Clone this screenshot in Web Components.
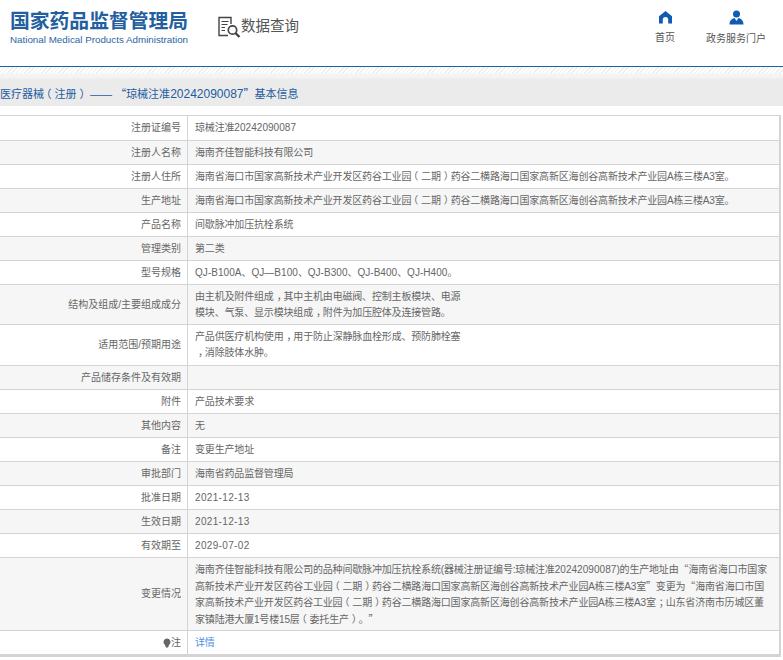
<!DOCTYPE html>
<html lang="zh">
<head>
<meta charset="utf-8">
<style>
html, body { margin: 0; padding: 0; background: #fff; }
body { font-family: "Liberation Sans", "Noto Sans CJK SC", sans-serif; overflow: hidden; height: 660px; }
</style>
</head>
<body>
<site-header></site-header>
<crumb-bar>医疗器械（注册） —— “琼械注准20242090087”基本信息</crumb-bar>
<info-table>
  <info-row label="注册证编号">琼械注准20242090087</info-row>
  <info-row label="注册人名称">海南齐佳智能科技有限公司</info-row>
  <info-row label="注册人住所">海南省海口市国家高新技术产业开发区药谷工业园（二期）药谷二横路海口国家高新区海创谷高新技术产业园A栋三楼A3室。</info-row>
  <info-row label="生产地址">海南省海口市国家高新技术产业开发区药谷工业园（二期）药谷二横路海口国家高新区海创谷高新技术产业园A栋三楼A3室。</info-row>
  <info-row label="产品名称">间歇脉冲加压抗栓系统</info-row>
  <info-row label="管理类别">第二类</info-row>
  <info-row label="型号规格">QJ-B100A、QJ—B100、QJ-B300、QJ-B400、QJ-H400。</info-row>
  <info-row label="结构及组成/主要组成成分" size="tall">由主机及附件组成，其中主机由电磁阀、控制主板模块、电源<br>模块、气泵、显示模块组成，附件为加压腔体及连接管路。</info-row>
  <info-row label="适用范围/预期用途" size="tall2">产品供医疗机构使用，用于防止深静脉血栓形成、预防肺栓塞<br>，消除肢体水肿。</info-row>
  <info-row label="产品储存条件及有效期"></info-row>
  <info-row label="附件">产品技术要求</info-row>
  <info-row label="其他内容">无</info-row>
  <info-row label="备注">变更生产地址</info-row>
  <info-row label="审批部门">海南省药品监督管理局</info-row>
  <info-row label="批准日期">2021-12-13</info-row>
  <info-row label="生效日期">2021-12-13</info-row>
  <info-row label="有效期至">2029-07-02</info-row>
  <info-row label="变更情况" size="huge">海南齐佳智能科技有限公司的品种间歇脉冲加压抗栓系统(器械注册证编号:琼械注准20242090087)的生产地址由“海南省海口市国家<br>高新技术产业开发区药谷工业园（二期）药谷二横路海口国家高新区海创谷高新技术产业园A栋三楼A3室”变更为“海南省海口市国<br>家高新技术产业开发区药谷工业园（二期）药谷二横路海口国家高新区海创谷高新技术产业园A栋三楼A3室；山东省济南市历城区董<br>家镇陆港大厦1号楼15层（委托生产）。”</info-row>
  <info-row label="注" note><a>详情</a></info-row>
</info-table>
<script>
// wraps punctuation and number runs so they can be nudged from ::slotted rules
function markText(html) {
  return html
    .replace(/\d{4}-\d\d-\d\d/g, '<span class="date">$&</span>')
    .replace(/QJ[-—][A-Z0-9]+|\d{6,}/g, '<span class="num">$&</span>')
    .replace(/（/g, '<span class="open">（</span>')
    .replace(/[）；，]/g, '<span class="close">$&</span>')
    .replace(/[“”]/g, '<span class="quote">$&</span>')
}

// half width glyphs with margins, so the mark sits mid cell
const markStyle = `
::slotted(.open) { font-feature-settings: "halt"; margin-left: 2px; margin-right: 3px; }
::slotted(.close) { font-feature-settings: "halt"; margin-left: 3px; margin-right: 2px; }
::slotted(.quote) { font-family: "Noto Sans CJK SC", sans-serif; }
`

class SiteHeader extends HTMLElement {
  constructor() {
    super()
    this.attachShadow({ mode: 'open' })
    this.shadowRoot.innerHTML = `${this.style}${this.html}`
  }

  get html() { return `
<div class="top">
  <div class="logo">
    <div class="cn">国家药品监督管理局</div>
    <div class="en">National Medical Products Administration</div>
  </div>
  <div class="query">
    <svg width="23" height="23" viewBox="0 0 23 23" fill="none" stroke="#444">
      <path d="M10 19.5H1V1.5H13V8" stroke-width="1.4"/>
      <path d="M3.5 5.5h7M3.5 8.5h6M3.5 11.5h3.5M3.5 14.5h3.5" stroke-width="1.2"/>
      <circle cx="14.5" cy="14" r="4.2" stroke-width="1.7"/>
      <path d="M17.5 17.2l4 3.8" stroke-width="2.4"/>
    </svg>
    <span>数据查询</span>
  </div>
  <div class="nav">
    <div class="item home">
      <svg width="15" height="14" viewBox="0 0 15 14"><path fill="#0f5cb0" d="M7.5 1L14 6.2V13.5H10.2V9.6a2.7 2.7 0 0 0-5.4 0V13.5H1V6.2Z"/></svg>
      <span>首页</span>
    </div>
    <div class="item portal">
      <svg width="15" height="15" viewBox="0 0 15 15"><circle fill="#0f5cb0" cx="7.5" cy="4" r="3.5"/><path fill="#0f5cb0" d="M0.5 14.5C0.5 10.5 3 8.5 5.5 8L7.5 11L9.5 8C12 8.5 14.5 10.5 14.5 14.5Z"/></svg>
      <span>政务服务门户</span>
    </div>
  </div>
</div>
<div class="hatch"></div>
    `}

  get style() { return `
<style>
:host { display: block; }
.top { display: flex; height: 67px; box-sizing: border-box; border-bottom: 1px solid #1c64a4; }
.logo { width: 218px; padding: 8px 0 0 10px; box-sizing: border-box; flex: none; }
.cn { font: bold 19.8px/24px "Noto Sans CJK SC", sans-serif; color: #235fa0; white-space: nowrap; }
.en { font: 9.8px/12px "Liberation Sans", sans-serif; color: #2a65a5; margin-top: 2px; white-space: nowrap; }
.query { display: flex; align-items: flex-start; padding-top: 16px; color: #555; font: 14.5px/20px "Noto Sans CJK SC", sans-serif; }
.query span { margin-top: -1px; }
.nav { margin-left: auto; display: flex; padding: 10px 17px 0 0; }
.item { display: flex; flex-direction: column; align-items: center; font: 10px/14px "Noto Sans CJK SC", sans-serif; color: #555; }
.item span { margin-top: 6px; }
.home { margin-right: 31px; }
.hatch { height: 12px; background:
  repeating-linear-gradient(135deg, #eceff1 0 1px, #fff 1px 3px) top/100% 6px no-repeat,
  linear-gradient(#fff, #f0f0f0); }
</style>
    `}
}
window.customElements.define('site-header', SiteHeader)

class CrumbBar extends HTMLElement {
  constructor() {
    super()
    this.attachShadow({ mode: 'open' })
    this.shadowRoot.innerHTML = `
<style>
:host {
  display: block;
  height: 27px;
  background: #ebebeb;
  color: #1d5c9f;
  font: 11px/28px "Liberation Sans", "Noto Sans CJK SC", sans-serif;
  white-space: nowrap;
  margin-bottom: 9px;
  text-spacing-trim: space-all;
}
::slotted(.num) { font-size: 12px; }
${markStyle}
</style>
<slot></slot>`
  }

  connectedCallback() {
    this.innerHTML = markText(this.innerHTML)
  }
}
window.customElements.define('crumb-bar', CrumbBar)

class InfoTable extends HTMLElement {
  constructor() {
    super()
    this.attachShadow({ mode: 'open' })
    this.shadowRoot.innerHTML = `
<style>
:host {
  display: block;
  width: 781px;
  box-sizing: border-box;
  border-top: 1px solid #d4d4d4;
  border-right: 2px solid #d4d4d4;
  border-bottom: 2px solid #d4d4d4;
}
::slotted(info-row:nth-child(even)) { background: #f6f6f6; }
::slotted(info-row:first-child) { height: 25px; }
</style>
<slot></slot>`
  }
}
window.customElements.define('info-table', InfoTable)

class InfoRow extends HTMLElement {
  constructor() {
    super()
    this.attachShadow({ mode: 'open' })
    const label = this.getAttribute('label')
    const bulb = this.hasAttribute('note')
      ? '<svg width="8" height="10" viewBox="0 0 8 10"><path fill="#666" d="M4 0.5a3.5 3.5 0 0 1 2.3 6.1L5 9.5H3L1.7 6.6A3.5 3.5 0 0 1 4 0.5Z"/></svg>'
      : ''
    this.shadowRoot.innerHTML = `
<style>
:host {
  display: grid;
  grid-template-columns: 187px 1fr;
  height: 24px;
  box-sizing: border-box;
  border-bottom: 1px solid #d4d4d4;
  font: 10px/16px "Liberation Sans", "Noto Sans CJK SC", sans-serif;
  color: #666;
  text-spacing-trim: space-all;
}
:host([size="tall"]) { height: 40px; }
:host([size="tall2"]) { height: 41px; }
:host([size="huge"]) { height: 73px; }
.label { display: flex; align-items: center; justify-content: flex-end; padding-right: 6px; white-space: nowrap; }
.value { display: flex; align-items: center; border-left: 1px solid #d4d4d4; padding-left: 7px; white-space: nowrap; letter-spacing: -0.17px; }
.value > div { width: 100%; }
::slotted(a) { color: #4a90e2; }
::slotted(.num) { letter-spacing: 0.05px; }
::slotted(.date) { letter-spacing: 0.34px; }
${markStyle}
</style>
<div class="label">${bulb}<span>${label}</span></div>
<div class="value"><div><slot></slot></div></div>`
  }

  connectedCallback() {
    this.innerHTML = markText(this.innerHTML)
  }
}
window.customElements.define('info-row', InfoRow)
</script>
</body>
</html>
